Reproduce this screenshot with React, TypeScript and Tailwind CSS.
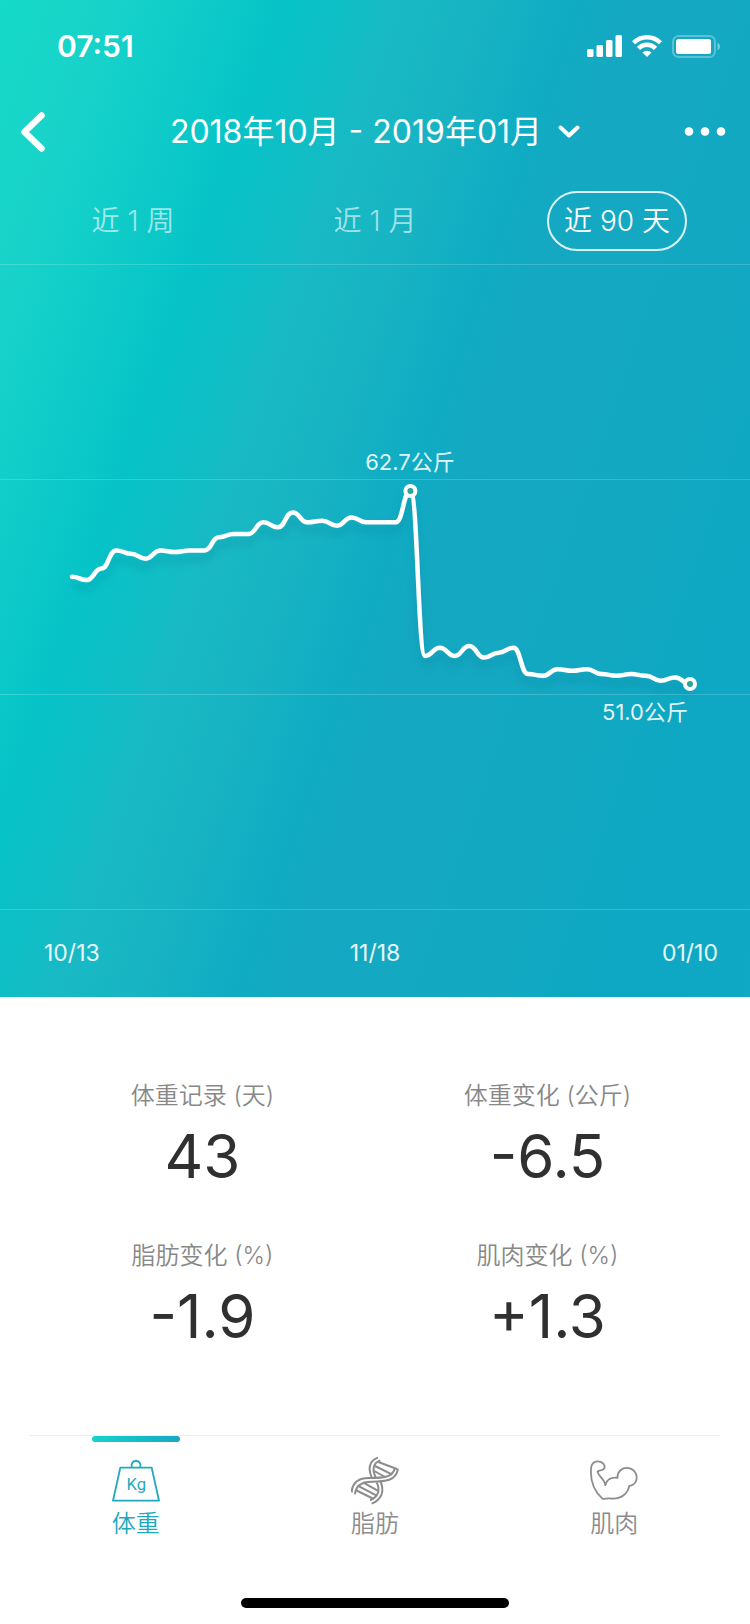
import { useState } from 'react';

// Daily weight in kg, 10/13 - 01/10
const WEIGHTS = [
  57.5, 57.3, 58.0, 59.1, 58.9, 58.6, 59.1, 59.0, 59.1, 59.1, 59.9, 60.1, 60.1, 60.8, 60.5,
  61.4, 60.8, 60.9, 60.6, 61.1, 60.8, 60.8, 60.8, 62.7, 52.7, 53.2, 52.7, 53.3, 52.6, 52.9,
  53.2, 51.6, 51.5, 51.9, 51.8, 51.9, 51.6, 51.5, 51.6, 51.5, 51.2, 51.4, 51.0,
];

const CHART_LEFT = 72;
const CHART_RIGHT = 690;
const MAX_Y = 227;
const MIN_Y = 420;

const RANGES = ['近 1 周', '近 1 月', '近 90 天'];

const STATS = [
  { label: '体重记录 (天)', value: '43' },
  { label: '体重变化 (公斤)', value: '-6.5' },
  { label: '脂肪变化 (%)', value: '-1.9' },
  { label: '肌肉变化 (%)', value: '+1.3' },
];

const getPoints = () => {
  const max = Math.max(...WEIGHTS);
  const min = Math.min(...WEIGHTS);
  const step = (CHART_RIGHT - CHART_LEFT) / (WEIGHTS.length - 1);
  return WEIGHTS.map((w, i) => ({
    x: CHART_LEFT + i * step,
    y: MAX_Y + ((max - w) / (max - min)) * (MIN_Y - MAX_Y),
  }));
};

const StatusBar = () => (
  <div className="flex items-center justify-between pt-7 pr-[29px] pl-[57px] text-white">
    <span className="text-[30px] leading-9 font-semibold">07:51</span>
    <div className="flex items-center gap-[10px]">
      {/* Signal */}
      <svg className="h-[22px] w-[35px]" viewBox="0 0 35 22" fill="currentColor">
        <rect x="0" y="14" width="6.500" height="8" rx="1.5" />
        <rect x="9.5" y="10" width="6.500" height="12" rx="1.5" />
        <rect x="19" y="5" width="6.500" height="17" rx="1.5" />
        <rect x="28.5" y="0" width="6.500" height="22" rx="1.5" />
      </svg>
      {/* Wifi */}
      <svg className="h-[22px] w-[30px]" viewBox="0 0 30 22" fill="none" stroke="currentColor" strokeWidth="4.400">
        <path d="M1.6 7.800a19 19 0 0 1 26.8 0" />
        <path d="M6.4 13.400a12 12 0 0 1 17.2 0" />
        <path d="M10.4 17.600a6.4 6.4 0 0 1 9.2 0L15 22z" fill="currentColor" stroke="none" />
      </svg>
      {/* Battery */}
      <svg className="h-[23px] w-[49px]" viewBox="0 0 49 23" fill="none">
        <rect x="1" y="1" width="42" height="21" rx="5.5" stroke="currentColor" strokeOpacity="0.3" strokeWidth="2" />
        <rect x="4" y="4" width="35" height="15" rx="2.5" fill="currentColor" />
        <path d="M45.5 7.5c3.4 1.6 3.4 6.4 0 8z" fill="currentColor" fillOpacity="0.4" />
      </svg>
    </div>
  </div>
);

const Header = () => (
  <header className="mt-9 grid grid-cols-[1fr_auto_1fr] items-center px-5 text-white">
    <button type="button" aria-label="返回" className="justify-self-start">
      <svg className="h-16 w-7" viewBox="0 0 28 64" fill="none" stroke="currentColor" strokeWidth="6.500" strokeLinecap="round" strokeLinejoin="round">
        <path d="M21.500 15.500L4.500 32L21.500 48.500" />
      </svg>
    </button>
    <button type="button" className="flex items-center gap-4 text-[32px] leading-10 font-normal">
      2018年10月 - 2019年01月
      <svg className="h-[14px] w-[22px]" viewBox="0 0 22 14" fill="none" stroke="currentColor" strokeWidth="4" strokeLinecap="round" strokeLinejoin="round">
        <path d="M2.500 2.500L11 10.500L19.500 2.500" />
      </svg>
    </button>
    <button type="button" aria-label="更多" className="justify-self-end">
      <svg className="h-16 w-[50px]" viewBox="0 0 50 64" fill="currentColor">
        <circle cx="9" cy="31.500" r="4.300" />
        <circle cx="25" cy="31.500" r="4.300" />
        <circle cx="41" cy="31.500" r="4.300" />
      </svg>
    </button>
  </header>
);

const WeightChart = () => {
  const points = getPoints();
  const peak = points[WEIGHTS.indexOf(Math.max(...WEIGHTS))];
  const last = points[points.length - 1];

  const line = points
    .map((p, i) => {
      if (i === 0) return `M${p.x} ${p.y}`;
      const prev = points[i - 1];
      const handle = (p.x - prev.x) / 2;
      return `C${prev.x + handle} ${prev.y} ${p.x - handle} ${p.y} ${p.x} ${p.y}`;
    })
    .join(' ');

  return (
    <svg className="block h-auto w-full" viewBox="0 0 750 646" fill="none">
      <defs>
        <filter id="line-shadow" x="-5%" y="-20%" width="110%" height="150%">
          <feDropShadow dx="0" dy="8" stdDeviation="4" floodColor="#05708a" floodOpacity="0.3" />
        </filter>
      </defs>

      {/* Grid lines */}
      {[0.5, 215.5, 430.5, 645.5].map((y) => (
        <path key={y} d={`M0 ${y}H750`} stroke="#fff" strokeOpacity="0.18" />
      ))}

      <path
        d={line}
        stroke="#fff"
        strokeWidth="4.500"
        strokeLinecap="round"
        strokeLinejoin="round"
        filter="url(#line-shadow)"
      />

      {[peak, last].map((p) => (
        <circle key={p.x} cx={p.x} cy={p.y} r="5" fill="#27a595" stroke="#fff" strokeWidth="4" />
      ))}

      <g fill="#fff" fillOpacity="0.9" className="text-[22px] font-normal">
        <text x="410" y="206" textAnchor="middle">62.7公斤</text>
        <text x="688" y="456" textAnchor="end">51.0公斤</text>
      </g>
    </svg>
  );
};

const WeightIcon = () => (
  <svg className="h-11 w-12" viewBox="0 0 144 132" fill="none" stroke="currentColor" strokeWidth="5.500" strokeLinejoin="round">
    <path d="M25 26H119L141 125H3z" />
    <path d="M60 25a13.500 13.500 0 1 1 24 0" />
    <text x="73" y="93" textAnchor="middle" fill="currentColor" stroke="none" className="font-[Roboto,sans-serif] text-[50px] font-normal">
      Kg
    </text>
  </svg>
);

const DnaIcon = () => (
  <svg className="h-12 w-12" viewBox="66 50 144 144" fill="none" stroke="currentColor" strokeWidth="6">
    <path d="M68 156C70 126 90 113 120 113C158 113 188 114 198 84" />
    <path d="M78 162C80 136 98 124 128 124C168 124 202 122 207 85" />
    <path d="M147 52C121 61 116 84 128 111" />
    <path d="M154 60C133 68 128 86 140 111" />
    <path d="M143 126C155 150 147 170 123 180" />
    <path d="M154 122C168 154 157 178 128 190" />
    <path d="M148 65L204 86M138 77L190 103M136 92L168 110" />
    <path d="M102 126L146 151M86 136L143 166M80 149L134 176" />
  </svg>
);

const MuscleIcon = () => (
  <svg className="h-12 w-12" viewBox="61 51 148 146" fill="none" stroke="currentColor" strokeWidth="5.500" strokeLinejoin="round">
    <path d="M100 179C74 156 62 125 64 88C65 66 80 60 94 65C107 70 109 83 102 88C96 93 90 90 84 95C88 112 107 118 108 137C112 120 126 111 146 114C145 94 160 82 180 84C200 87 209 108 203 124C199 134 192 138 182 139C178 160 160 180 128 178C116 176 108 179 100 179z" />
  </svg>
);

const TABS = [
  { label: '体重', icon: WeightIcon },
  { label: '脂肪', icon: DnaIcon },
  { label: '肌肉', icon: MuscleIcon },
];

const App = () => {
  const [range, setRange] = useState(2);
  const [tab, setTab] = useState(0);

  return (
    <div className="flex min-h-screen flex-col bg-white font-[Inter,'Noto_Sans_CJK_SC',sans-serif]">
      <section className="bg-[linear-gradient(109deg,#14dac8_0%,#19d3c9_9%,#10cdc9_17%,#06c3c8_26%,#18b9c4_37%,#17b3c3_45%,#0facc3_52%,#15a8c2_58%,#13a8c2_75%,#0ea8c4_85%,#10a8c4_100%)]">
        <StatusBar />
        <Header />

        {/* Range switch */}
        <div className="mt-[27px] mb-[13px] grid grid-cols-3 justify-items-center px-3">
          {RANGES.map((label, i) => (
            <button
              key={label}
              type="button"
              onClick={() => setRange(i)}
              className={`h-[60px] rounded-full border-2 px-[15px] text-[28px] leading-8 font-[350] ${
                range === i ? 'border-white/85 text-white' : 'border-transparent text-white/60'
              }`}
            >
              {label}
            </button>
          ))}
        </div>

        <WeightChart />

        {/* Dates */}
        <div className="grid grid-cols-3 px-8 pt-[27px] pb-7 text-[23px] leading-8 font-normal text-white/90">
          <span className="pl-3">10/13</span>
          <span className="text-center">11/18</span>
          <span className="text-right">01/10</span>
        </div>
      </section>

      <dl className="grid grid-cols-2 gap-y-[42px] px-[30px] pt-[81px] text-center">
        {STATS.map((stat) => (
          <div key={stat.label}>
            <dt className="text-2xl leading-9 font-[350] text-[#888888]">{stat.label}</dt>
            <dd className="mt-0.5 text-[60px] leading-20 font-normal text-[#303030]">{stat.value}</dd>
          </div>
        ))}
      </dl>

      <nav className="mt-auto">
        <div className="mx-[30px] border-t border-[#ececec]" />
        <div className="grid grid-cols-3 px-4">
          {TABS.map(({ label, icon: Icon }, i) => (
            <button
              key={label}
              type="button"
              onClick={() => setTab(i)}
              className={`flex flex-col items-center text-2xl leading-8 font-[350] ${
                tab === i ? 'text-[#1fa9bd]' : 'text-[#8c8c8c]'
              }`}
            >
              <span
                className={`h-[6px] w-[88px] rounded-full ${
                  tab === i ? 'bg-linear-to-r from-[#16d3c8] to-[#18a8c2]' : ''
                }`}
              />
              <span className="mt-[15px] mb-[3px] flex h-12 items-center">
                <Icon />
              </span>
              {label}
            </button>
          ))}
        </div>
        <div className="mx-auto mt-[58px] mb-4 h-[10px] w-[268px] rounded-full bg-black" />
      </nav>
    </div>
  );
};

export default App;
